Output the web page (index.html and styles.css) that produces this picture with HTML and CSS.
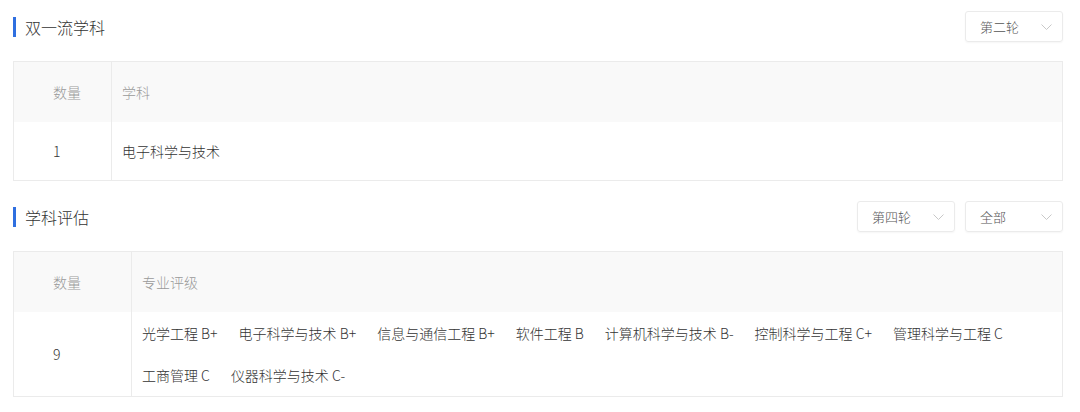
FILE: index.html
```html
<!DOCTYPE html>
<html lang="zh-CN">
<head>
  <meta charset="UTF-8" />
  <title>学科</title>
  <link rel="stylesheet" href="styles.css">
</head>
<body>
  <div class="page">

    <div class="section-head">
      <h2 class="section-title">双一流学科</h2>
      <div class="filters">
        <div class="select">
          <span>第二轮</span>
          <svg class="arrow" width="11" height="6" viewBox="0 0 11 6"><path d="M0.5 0.5 L5.5 5.5 L10.5 0.5" fill="none" stroke="#c8c8c8" stroke-width="1"/></svg>
        </div>
      </div>
    </div>

    <div class="grid grid-first">
      <div class="cell head num">数量</div>
      <div class="cell head">学科</div>
      <div class="cell num">1</div>
      <div class="cell">电子科学与技术</div>
    </div>

    <div class="section-head">
      <h2 class="section-title">学科评估</h2>
      <div class="filters">
        <div class="select">
          <span>第四轮</span>
          <svg class="arrow" width="11" height="6" viewBox="0 0 11 6"><path d="M0.5 0.5 L5.5 5.5 L10.5 0.5" fill="none" stroke="#c8c8c8" stroke-width="1"/></svg>
        </div>
        <div class="select">
          <span>全部</span>
          <svg class="arrow" width="11" height="6" viewBox="0 0 11 6"><path d="M0.5 0.5 L5.5 5.5 L10.5 0.5" fill="none" stroke="#c8c8c8" stroke-width="1"/></svg>
        </div>
      </div>
    </div>

    <div class="grid grid-second">
      <div class="cell head num">数量</div>
      <div class="cell head">专业评级</div>
      <div class="cell num">9</div>
      <div class="cell tags">
        <span class="tag">光学工程 B+</span>
        <span class="tag">电子科学与技术 B+</span>
        <span class="tag">信息与通信工程 B+</span>
        <span class="tag">软件工程 B</span>
        <span class="tag">计算机科学与技术 B-</span>
        <span class="tag">控制科学与工程 C+</span>
        <span class="tag">管理科学与工程 C</span>
        <span class="tag">工商管理 C</span>
        <span class="tag">仪器科学与技术 C-</span>
      </div>
    </div>

  </div>
</body>
</html>
```

FILE: styles.css
```css
* {
  margin: 0;
  padding: 0;
  box-sizing: border-box;
}

body {
  background: #fff;
  color: #333;
  font-family: "Noto Sans CJK SC", "Liberation Sans", sans-serif;
  font-size: 14px;
  font-weight: 300;
}

.page {
  width: 1050px;
  margin-left: 13px;
  padding-top: 11px;
}

.section-head {
  display: flex;
  justify-content: space-between;
  align-items: center;
  height: 31px;
  margin-bottom: 19px;
}

.grid + .section-head {
  margin-top: 20px;
}

.section-title {
  font-size: 16px;
  font-weight: 300;
  color: #333;
  border-left: 3px solid #2f6fe0;
  padding-left: 9px;
  line-height: 20px;
}

.filters {
  display: flex;
  gap: 10px;
}

.select {
  width: 98px;
  height: 31px;
  border: 1px solid #ebebeb;
  border-radius: 3px;
  box-shadow: 0 1px 2px rgba(0, 0, 0, 0.04);
  display: flex;
  align-items: center;
  justify-content: space-between;
  padding: 0 10px 0 14px;
  font-size: 13px;
  color: #555;
}

.grid {
  display: grid;
  border-top: 1px solid #ebebeb;
  border-left: 1px solid #ebebeb;
}

.grid-first {
  grid-template-columns: 98px 1fr;
}

.grid-second {
  grid-template-columns: 118px 1fr;
}

.cell {
  border-right: 1px solid #ebebeb;
  border-bottom: 1px solid #ebebeb;
  display: flex;
  align-items: center;
  padding-left: 10px;
  min-height: 59px;
  color: #333;
}

.cell.head {
  background: #f9f9f9;
  color: #999;
  border-bottom: none;
  min-height: 60px;
}

.cell.num {
  padding-left: 39px;
}

.tags {
  flex-wrap: wrap;
  line-height: 42px;
  min-height: 84px;
}

.tag {
  margin-right: 21px;
}
```
